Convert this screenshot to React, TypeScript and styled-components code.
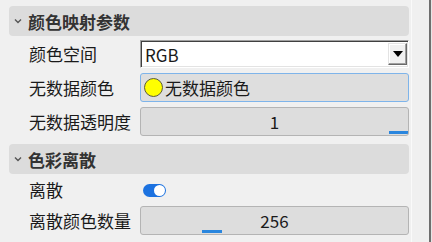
import React from 'react';
import styled, { createGlobalStyle } from 'styled-components';

const GlobalStyle = createGlobalStyle`
  html, body {
    margin: 0;
    padding: 0;
    background: #f0f0f0;
  }
  body {
    font-family: "Noto Sans CJK SC", "Noto Sans", sans-serif;
    color: #1a1a1a;
  }
`;

const Frame = styled.div`
  display: flex;
  width: 432px;
  height: 242px;
  overflow: hidden;
  background: #f0f0f0;
`;

const Panel = styled.div`
  width: 411px;
  padding: 6px 2px 0 9px;
  box-sizing: border-box;
  display: flex;
  flex-direction: column;
`;

const Gutter = styled.div`
  width: 21px;
  display: flex;
  border-left: 1px solid #fafafa;
  box-sizing: border-box;
`;

const GutterFill = styled.div`
  flex: 1;
  background: #f0f0f0;
`;

const GutterLine = styled.div`
  width: 2px;
  background: #6e6e6e;
  border-right: 1px solid #e6e6e6;
`;

const SectionHeader = styled.div<{ $top: number }>`
  height: 30px;
  margin-top: ${(p) => p.$top}px;
  display: flex;
  align-items: center;
  gap: 6px;
  padding-left: 5px;
  border-radius: 4px;
  background: #dcdcdc;
  font-size: 17px;
  font-weight: 700;
  color: #333333;
`;

const Row = styled.div<{ $height: number; $top: number }>`
  height: ${(p) => p.$height}px;
  margin-top: ${(p) => p.$top}px;
  display: grid;
  grid-template-columns: 131px 1fr;
  align-items: center;
`;

const Label = styled.div`
  padding-left: 20px;
  font-size: 17px;
  line-height: 20px;
  white-space: nowrap;
`;

const Select = styled.div`
  height: 28px;
  box-sizing: border-box;
  display: flex;
  align-items: center;
  justify-content: space-between;
  background: #ffffff;
  border-top: 1px solid #a0a0a0;
  border-left: 1px solid #a0a0a0;
  border-right: 1px solid #ffffff;
  border-bottom: 1px solid #ffffff;
  box-shadow: inset 1px 1px 0 #404040, inset -1px -1px 0 #e3e3e3;
  padding: 0 1px 0 4px;
  font-size: 17px;
`;

const DropButton = styled.div`
  width: 19px;
  height: 22px;
  box-sizing: border-box;
  display: flex;
  align-items: center;
  justify-content: center;
  background: #f0f0f0;
  border-top: 1px solid #e3e3e3;
  border-left: 1px solid #e3e3e3;
  border-right: 1px solid #696969;
  border-bottom: 1px solid #696969;
  box-shadow: inset -1px -1px 0 #a0a0a0, inset 1px 1px 0 #ffffff;
`;

const ColorButton = styled.div`
  height: 29px;
  box-sizing: border-box;
  display: flex;
  align-items: center;
  gap: 2px;
  padding-left: 3px;
  border: 1px solid #7eb4ea;
  border-radius: 3px;
  background: #dedede;
  font-size: 17px;
`;

const Swatch = styled.span<{ $color: string }>`
  width: 19px;
  height: 19px;
  box-sizing: border-box;
  border-radius: 50%;
  border: 1px solid #5c5c38;
  background: ${(p) => p.$color};
`;

const SpinBox = styled.div`
  position: relative;
  height: 29px;
  box-sizing: border-box;
  display: flex;
  align-items: center;
  justify-content: center;
  border: 1px solid #b4b4b4;
  border-radius: 3px;
  background: #dddddd;
  font-size: 17px;
  overflow: hidden;
`;

const ProgressMark = styled.span<{ $side: 'left' | 'right'; $offset: number }>`
  position: absolute;
  bottom: 1px;
  ${(p) => p.$side}: ${(p) => p.$offset}px;
  width: 20px;
  height: 3px;
  background: #2a86de;
`;

const Toggle = styled.div<{ $on: boolean }>`
  width: 23px;
  height: 13px;
  margin-left: 3px;
  box-sizing: border-box;
  border-radius: 7px;
  background: ${(p) => (p.$on ? '#1c72e0' : '#9a9a9a')};
  display: flex;
  align-items: center;
  justify-content: ${(p) => (p.$on ? 'flex-end' : 'flex-start')};
  padding: 0 1px;
`;

const Knob = styled.span`
  width: 11px;
  height: 11px;
  border-radius: 50%;
  background: #ffffff;
`;

const Chevron: React.FC = () => (
  <svg width="8" height="6" viewBox="0 0 8 6">
    <path d="M1 1.5 L4 4.5 L7 1.5" fill="none" stroke="#555" strokeWidth="1.4" />
  </svg>
);

const Arrow: React.FC = () => (
  <svg width="10" height="6" viewBox="0 0 10 6">
    <path d="M0 0 H10 L5 6 Z" fill="#000" />
  </svg>
);

const App: React.FC = () => (
  <>
    <GlobalStyle />
    <Frame>
      <Panel>
        <SectionHeader $top={0}>
          <Chevron />
          颜色映射参数
        </SectionHeader>
        <Row $height={28} $top={4}>
          <Label>颜色空间</Label>
          <Select>
            RGB
            <DropButton>
              <Arrow />
            </DropButton>
          </Select>
        </Row>
        <Row $height={29} $top={5}>
          <Label>无数据颜色</Label>
          <ColorButton>
            <Swatch $color="#ffff00" />
            无数据颜色
          </ColorButton>
        </Row>
        <Row $height={29} $top={5}>
          <Label>无数据透明度</Label>
          <SpinBox>
            1
            <ProgressMark $side="right" $offset={-1} />
          </SpinBox>
        </Row>
        <SectionHeader $top={8}>
          <Chevron />
          色彩离散
        </SectionHeader>
        <Row $height={24} $top={4}>
          <Label>离散</Label>
          <Toggle $on>
            <Knob />
          </Toggle>
        </Row>
        <Row $height={28} $top={4}>
          <Label>离散颜色数量</Label>
          <SpinBox>
            256
            <ProgressMark $side="left" $offset={61} />
          </SpinBox>
        </Row>
      </Panel>
      <Gutter>
        <GutterFill />
        <GutterLine />
      </Gutter>
    </Frame>
  </>
);

export default App;
